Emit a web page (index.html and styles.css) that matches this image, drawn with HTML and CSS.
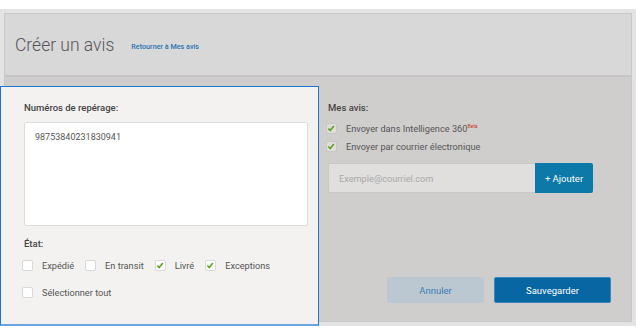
FILE: index.html
```html
<!DOCTYPE html>
<html>
	<head>
		<meta http-equiv="content-type" content="text/html;charset=UTF-8" />
		<link rel="stylesheet" href="styles.css">
	</head>
	<body>
		<div class="frame">
			<div class="panel">
				<div class="header">
					<span class="pageTitle">Créer un avis</span>
					<a class="backLink" href="#">Retourner à Mes avis</a>
				</div>
				<div class="content">
					<div class="leftCol">
						<div class="label">Numéros de repérage:</div>
						<div class="trackBox">98753840231830941</div>
						<div class="label stateLabel">État:</div>
						<div class="checkRow">
							<span class="check"></span><span class="checkText">Expédié</span>
							<span class="check"></span><span class="checkText">En transit</span>
							<span class="check on"><svg viewBox="0 0 12 12"><path d="M2.8 6 L5 8.4 L9.4 3"/></svg></span><span class="checkText">Livré</span>
							<span class="check on"><svg viewBox="0 0 12 12"><path d="M2.8 6 L5 8.4 L9.4 3"/></svg></span><span class="checkText">Exceptions</span>
						</div>
						<div class="checkRow allRow">
							<span class="check"></span><span class="checkText">Sélectionner tout</span>
						</div>
					</div>
					<div class="rightCol">
						<div class="label">Mes avis:</div>
						<div class="checkRow notifyRow">
							<span class="check dim on"><svg viewBox="0 0 12 12"><path d="M2.8 6 L5 8.4 L9.4 3"/></svg></span><span class="checkText">Envoyer dans Intelligence 360<sup class="beta">Beta</sup></span>
						</div>
						<div class="checkRow notifyRow">
							<span class="check dim on"><svg viewBox="0 0 12 12"><path d="M2.8 6 L5 8.4 L9.4 3"/></svg></span><span class="checkText">Envoyer par courrier électronique</span>
						</div>
						<div class="emailRow">
							<input type="text" class="emailInput" placeholder="Exemple@courriel.com"/>
							<button class="addBtn">+ Ajouter</button>
						</div>
						<div class="actions">
							<button class="cancelBtn">Annuler</button>
							<button class="saveBtn">Sauvegarder</button>
						</div>
					</div>
				</div>
			</div>
		</div>
	</body>
</html>
```

FILE: styles.css
```css
body{
	margin: 0;
	padding-top: 9px;
	background: #ffffff;
	font-family: Roboto, "Liberation Sans", sans-serif;
	color: #4a4a4a;
}
.frame{
	width: 636px;
	box-sizing: border-box;
	padding: 4px 4px 4px 4px;
	background: #e3e3e3;
}
.panel{
	border: solid 1px #c8c8c8;
	display: flex;
	flex-direction: column;
}
.header{
	height: 63px;
	background: #d8d8d8;
	border-bottom: solid 2px #c6c4c4;
	display: flex;
	flex-direction: row;
	align-items: center;
	padding-left: 10px;
	box-sizing: border-box;
}
.pageTitle{
	font-size: 17.5px;
	font-weight: 300;
	color: #555555;
}
.backLink{
	margin-left: 17px;
	margin-top: 3px;
	font-size: 7.2px;
	font-weight: 500;
	color: #2b73b1;
	text-decoration: none;
}
.content{
	height: 244px;
	background: #d0cecd;
	display: flex;
	flex-direction: row;
	align-items: stretch;
}
.leftCol{
	width: 319px;
	flex-shrink: 0;
	box-sizing: border-box;
	margin: 9px 0 -5px -5px;
	padding: 15px 10px 0 23px;
	background: #f3f2f0;
	border: solid 1px #1c77d4;
	border-bottom: solid 2px #6aa2e2;
	display: flex;
	flex-direction: column;
}
.label{
	font-size: 9.5px;
	font-weight: 500;
	line-height: 12px;
	color: #444444;
}
.trackBox{
	margin-top: 8px;
	height: 104px;
	box-sizing: border-box;
	background: #ffffff;
	border: solid 1px #dcdcdc;
	border-radius: 2px;
	padding: 8px 10px;
	font-size: 9px;
	line-height: 12px;
	color: #555555;
}
.stateLabel{
	margin-top: 12px;
}
.checkRow{
	display: flex;
	flex-direction: row;
	align-items: center;
	height: 14px;
	margin-top: 8px;
	margin-left: -2px;
}
.allRow{
	margin-top: 13px;
}
.check{
	width: 11px;
	height: 11px;
	box-sizing: border-box;
	background: #ffffff;
	border: solid 1px #d8d8d8;
	border-radius: 2px;
	display: flex;
	flex-shrink: 0;
}
.check svg{
	width: 11px;
	height: 11px;
	margin: -1px 0 0 -1px;
}
.check path{
	fill: none;
	stroke: #62a21e;
	stroke-width: 2;
}
.check.dim{
	background: #dfdedd;
	border-color: #c8c7c6;
}
.checkText{
	font-size: 9.2px;
	color: #555555;
	margin-left: 9px;
	margin-right: 11px;
}
.rightCol{
	flex-grow: 1;
	padding: 25px 20px 18px 9px;
	display: flex;
	flex-direction: column;
}
.notifyRow{
	margin-top: 7px;
	margin-left: -2px;
}
.notifyRow + .notifyRow{
	margin-top: 4px;
}
.beta{
	font-size: 5px;
	color: #d2342c;
	vertical-align: 4px;
	line-height: 0;
}
.emailRow{
	margin-top: 10px;
	display: flex;
	flex-direction: row;
	height: 30px;
	width: 265px;
}
.emailInput{
	flex-grow: 1;
	width: 0;
	box-sizing: border-box;
	background: #e0dfde;
	border: solid 1px #c9c8c7;
	border-right: none;
	outline: none;
	border-radius: 2px 0 0 2px;
	padding: 0 10px;
	font-family: Roboto, "Liberation Sans", sans-serif;
	font-size: 9.2px;
	color: #555555;
}
.emailInput::placeholder{
	color: #a8a8a8;
}
.addBtn{
	width: 58px;
	border: none;
	border-radius: 0 2px 2px 0;
	background: #0d79a8;
	color: #ffffff;
	font-family: Roboto, "Liberation Sans", sans-serif;
	font-size: 9.5px;
}
.actions{
	margin-top: auto;
	display: flex;
	flex-direction: row;
	justify-content: flex-end;
	height: 26px;
}
.cancelBtn{
	width: 97px;
	border: none;
	border-radius: 2px;
	background: #bcc8d1;
	color: #3c7db2;
	font-family: Roboto, "Liberation Sans", sans-serif;
	font-size: 9.5px;
}
.saveBtn{
	width: 117px;
	margin-left: 10px;
	border: solid 1px #3a86bb;
	border-radius: 2px;
	background: #0866a2;
	color: #ffffff;
	font-family: Roboto, "Liberation Sans", sans-serif;
	font-size: 9.5px;
}
```
